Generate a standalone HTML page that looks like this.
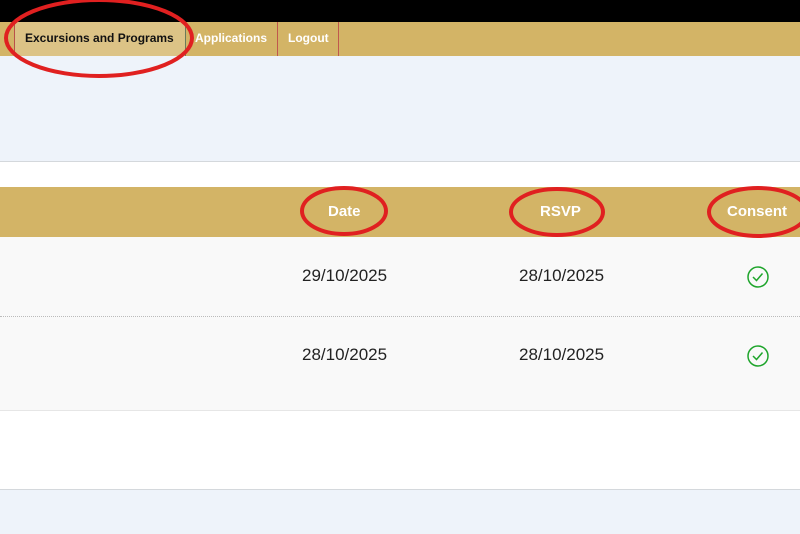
<!DOCTYPE html>
<html><head><style>
body{margin:0;width:800px;height:533px;position:relative;overflow:hidden;font-family:"Liberation Sans",Arial,sans-serif;background:#fff}
.a{position:absolute}
</style></head><body>
<div class="a" style="left:0;top:0;width:800px;height:22px;background:#000"></div>
<div class="a" style="left:0;top:22px;width:800px;height:34px;background:#d3b466"></div>
<div class="a" style="left:14px;top:22px;width:170px;height:34px;background:#dcc386;border-left:1px solid #b9514a;border-right:1px solid #6b7a5a"></div>
<div class="a" style="left:25px;top:31px;font-size:12px;font-weight:bold;color:#111">Excursions and Programs</div>
<div class="a" style="left:195px;top:31px;font-size:12px;font-weight:bold;color:#fff">Applications</div>
<div class="a" style="left:277px;top:22px;width:60px;height:34px;border-left:1px solid #c0584d;border-right:1px solid #c0584d"></div>
<div class="a" style="left:288px;top:31px;font-size:12px;font-weight:bold;color:#fff">Logout</div>
<div class="a" style="left:0;top:56px;width:800px;height:105px;background:#eef3fa;border-bottom:1px solid #d4d8dc"></div>
<div class="a" style="left:0;top:187px;width:800px;height:50px;background:#d3b466"></div>
<div class="a" style="left:328px;top:203px;font-size:15px;font-weight:bold;color:#fff">Date</div>
<div class="a" style="left:540px;top:203px;font-size:15px;font-weight:bold;color:#fff">RSVP</div>
<div class="a" style="left:727px;top:203px;font-size:15px;font-weight:bold;color:#fff">Consent</div>
<div class="a" style="left:0;top:237px;width:800px;height:173px;background:#f9f9f9;border-bottom:1px solid #e6e6e6"></div>
<div class="a" style="left:0;top:316px;width:800px;border-top:1px dotted #bbb"></div>
<div class="a" style="left:302px;top:266px;font-size:17px;color:#222">29/10/2025</div>
<div class="a" style="left:519px;top:266px;font-size:17px;color:#222">28/10/2025</div>
<div class="a" style="left:302px;top:345px;font-size:17px;color:#222">28/10/2025</div>
<div class="a" style="left:519px;top:345px;font-size:17px;color:#222">28/10/2025</div>
<div class="a" style="left:0;top:489px;width:800px;height:44px;background:#eef3fa;border-top:1px solid #d4d8dc"></div>
<svg class="a" style="left:0;top:0" width="800" height="533">
<g fill="none" stroke="#1fa52c" stroke-width="1.5">
<circle cx="758" cy="277" r="10"/><path d="M753 277l3.5 3.5 6-7"/>
<circle cx="758" cy="356" r="10"/><path d="M753 356l3.5 3.5 6-7"/>
</g>
<g fill="none" stroke="#e02020" stroke-width="4">
<ellipse cx="99" cy="38" rx="93" ry="38"/>
<ellipse cx="344" cy="211" rx="42" ry="23"/>
<ellipse cx="557" cy="212" rx="46" ry="23"/>
<ellipse cx="758" cy="212" rx="49" ry="24"/>
</g>
</svg>
</body></html>
